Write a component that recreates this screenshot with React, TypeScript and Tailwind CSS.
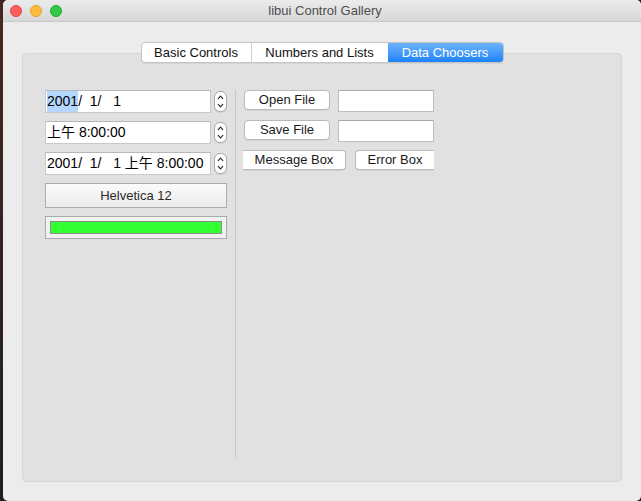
import React from 'react';

const font = { fontFamily: '"Liberation Sans", "Noto Sans CJK SC", Arial, sans-serif' };

const Stepper: React.FC = () => (
  <div className="ml-[3px] flex h-[21px] w-[13px] flex-col items-center justify-center rounded-[6px] border border-[#a9a9a9] bg-white shadow-[0_1px_0_rgba(0,0,0,0.08)]">
    <svg width="7" height="15" viewBox="0 0 7 15" fill="none" stroke="#222" strokeWidth="1.1" strokeLinecap="round" strokeLinejoin="round">
      <path d="M1.2 4.6 L3.5 2.2 L5.8 4.6" />
      <path d="M1.2 10.4 L3.5 12.8 L5.8 10.4" />
    </svg>
  </div>
);

const DateField: React.FC<{ children: React.ReactNode; mt?: string }> = ({ children, mt }) => (
  <div className={`flex items-center ${mt ?? ''}`}>
    <div className="flex h-[23px] w-[166px] items-center border border-[#c8c8c8] border-t-[#b8b8b8] bg-white pl-[1px] text-[14px] text-black whitespace-pre">
      {children}
    </div>
    <Stepper />
  </div>
);

const PushButton: React.FC<{ label: string; className?: string }> = ({ label, className }) => (
  <div
    className={`flex h-[20px] items-center justify-center border border-[#b9b9b9] bg-white text-[13px] text-[#1a1a1a] shadow-[0_1px_0_rgba(0,0,0,0.06)] ${className ?? ''}`}
  >
    {label}
  </div>
);

const TextBox: React.FC = () => (
  <div className="h-[22px] w-[96px] border border-[#bdbdbd] border-t-[#aaaaaa] bg-white" />
);

export default function App() {
  return (
    <div className="flex h-[501px] w-[641px] overflow-hidden bg-[#2a1a18]" style={font}>
      <div className="w-[3px] bg-gradient-to-b from-[#4a2520] to-[#1c1f22]" />
      <div className="flex flex-1 flex-col overflow-hidden rounded-[5px] bg-[#ececec]">
        {/* title bar */}
        <div className="flex h-[22px] items-center border-b border-[#c9c9c9] bg-gradient-to-b from-[#ebebeb] to-[#d8d8d8] pl-[7px]">
          <div className="flex gap-[8px]">
            <span className="h-[12px] w-[12px] rounded-full border border-[#e0443e] bg-[#fc605c]" />
            <span className="h-[12px] w-[12px] rounded-full border border-[#dea123] bg-[#fdbc40]" />
            <span className="h-[12px] w-[12px] rounded-full border border-[#1aab29] bg-[#34c84a]" />
          </div>
          <div className="flex-1 pr-[53px] text-center text-[13px] text-[#4d4d4d]">libui Control Gallery</div>
        </div>

        {/* body */}
        <div className="flex flex-1 flex-col px-[19px] pt-[20px] pb-[19px]">
          <div className="relative z-10 -mb-[10px] flex justify-center">
            <div className="flex h-[21px] overflow-hidden rounded-[4px] border border-[#c4c4c4] bg-white text-[13px] shadow-[0_1px_0_rgba(0,0,0,0.05)]">
              <div className="flex w-[110px] items-center justify-center border-r border-[#d0d0d0] text-[#111]">Basic Controls</div>
              <div className="flex w-[136px] items-center justify-center text-[#111]">Numbers and Lists</div>
              <div className="flex w-[115px] items-center justify-center bg-gradient-to-b from-[#6cb3fa] to-[#1a82fb] text-white">Data Choosers</div>
            </div>
          </div>

          <div className="flex flex-1 rounded-[4px] border border-[#d6d6d6] bg-[#e1e1e1] pt-[36px] pb-[22px] pl-[22px]">
            {/* left column */}
            <div className="flex w-[182px] flex-col">
              <DateField>
                <span className="bg-[#b3d7ff]">2001</span>
                <span>/  1/   1</span>
              </DateField>
              <DateField mt="mt-[8px]">上午 8:00:00</DateField>
              <DateField mt="mt-[8px]">2001/  1/   1 上午 8:00:00</DateField>
              <div className="mt-[8px] flex h-[25px] items-center justify-center border border-[#acacac] bg-gradient-to-b from-[#fbfbfb] to-[#ececec] text-[13px] text-[#2a2a2a]">
                Helvetica 12
              </div>
              <div className="mt-[8px] flex h-[23px] items-center border border-[#a9a9a9] bg-[#f2f2f2] px-[4px]">
                <div className="h-[13px] flex-1 border border-[#8c8c8c] bg-[#33ff33]" />
              </div>
            </div>

            {/* separator */}
            <div className="mx-[8px] w-px bg-[#c8c8c8]" />

            {/* right column */}
            <div className="flex w-[190px] flex-col">
              <div className="flex items-start">
                <PushButton label="Open File" className="w-[86px] rounded-[4px]" />
                <div className="ml-[8px]">
                  <TextBox />
                </div>
              </div>
              <div className="mt-[8px] flex items-start">
                <PushButton label="Save File" className="w-[86px] rounded-[4px]" />
                <div className="ml-[8px]">
                  <TextBox />
                </div>
              </div>
              <div className="mt-[8px] flex items-start">
                <PushButton label="Message Box" className="-ml-px w-[103px] rounded-r-[4px] border-l-0" />
                <PushButton label="Error Box" className="ml-[9px] w-[79px] rounded-l-[4px] border-r-0" />
              </div>
            </div>
          </div>
        </div>
      </div>
    </div>
  );
}
